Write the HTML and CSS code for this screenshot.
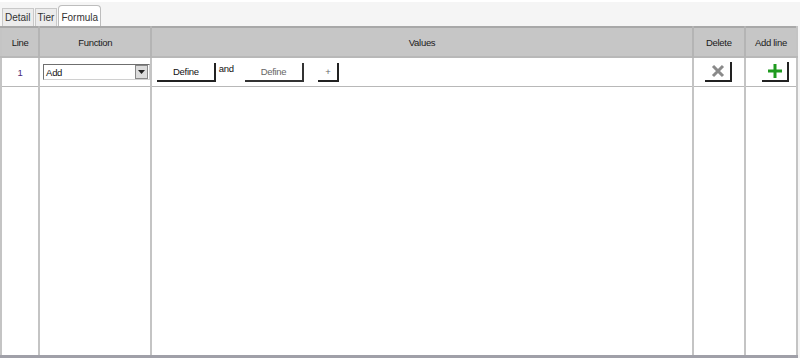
FILE: index.html
```html
<!DOCTYPE html>
<html lang="en">
<head>
  <meta charset="UTF-8" />
  <title>Formula</title>
  <link rel="stylesheet" href="styles.css">
</head>
<body>
  <div class="panel">
    <ul class="tabs">
      <li class="tab">Detail</li>
      <li class="tab">Tier</li>
      <li class="tab active">Formula</li>
    </ul>

    <table class="grid">
      <colgroup>
        <col class="c-line">
        <col class="c-func">
        <col class="c-values">
        <col class="c-del">
        <col class="c-add">
      </colgroup>
      <thead>
        <tr>
          <th>Line</th>
          <th>Function</th>
          <th>Values</th>
          <th>Delete</th>
          <th>Add line</th>
        </tr>
      </thead>
      <tbody>
        <tr class="row">
          <td class="num">1</td>
          <td>
            <div class="select">
              <span>Add</span>
              <span class="arrow"><svg width="7" height="4" viewBox="0 0 7 4"><path d="M0 0h7L3.5 4z" fill="#222"/></svg></span>
            </div>
          </td>
          <td class="values">
            <button class="btn define">Define</button>
            <span class="and">and</span>
            <button class="btn define faded">Define</button>
            <button class="btn plus">+</button>
          </td>
          <td class="center">
            <button class="btn icon">
              <svg width="14" height="14" viewBox="0 0 14 14"><path d="M2 2L12 12M12 2L2 12" stroke="#8a8a8a" stroke-width="3"/></svg>
            </button>
          </td>
          <td class="center">
            <button class="btn icon add">
              <svg width="16" height="16" viewBox="0 0 16 16"><path d="M8 1v14M1 8h14" stroke="#1f9a1f" stroke-width="3"/></svg>
            </button>
          </td>
        </tr>
        <tr class="filler">
          <td></td><td></td><td></td><td></td><td></td>
        </tr>
      </tbody>
    </table>
  </div>
</body>
</html>
```

FILE: styles.css
```css
body {
  margin: 0;
  background: #fff;
  font-family: Arial, "Liberation Sans", sans-serif;
  font-size: 9.5px;
  letter-spacing: -0.3px;
  color: #222;
}

.panel {
  margin-top: 2px;
  background: #f5f5f5;
  height: 356px;
  display: flex;
  flex-direction: column;
}

.tabs {
  list-style: none;
  margin: 0;
  padding: 2px 0 0 2px;
  display: flex;
  align-items: flex-end;
  height: 22px;
}

.tab {
  height: 17px;
  line-height: 18px;
  padding: 0 2px;
  margin-right: 1px;
  background: #ececec;
  border: 1px solid #c9c9c9;
  border-bottom: none;
  color: #333;
  font-size: 10px;
  letter-spacing: 0;
}

.tab.active {
  height: 20px;
  line-height: 23px;
  background: #fff;
  border-radius: 4px 4px 0 0;
  border-color: #bdbdbd;
}

.grid {
  flex: 1;
  width: 798px;
  border-collapse: collapse;
  table-layout: fixed;
  background: #fff;
  border-top: 2px solid #a8a8a8;
  border-left: 2px solid #c4c4c4;
  border-right: 2px solid #c4c4c4;
  border-bottom: 3px solid #a0a0a8;
}

.c-line { width: 38px; }
.c-func { width: 112px; }
.c-values { width: 540px; }
.c-del { width: 52px; }
.c-add { width: 52px; }

th {
  height: 28px;
  background: #c6c6c6;
  font-weight: normal;
  color: #1a1a1a;
  border-left: 2px solid #b4b4b4;
  padding: 0;
}

th:first-child, td:first-child {
  border-left: none;
}

td {
  border-left: 2px solid #c4c4c4;
  padding: 0;
}

.row td {
  height: 28px;
  border-top: 2px solid #b8b8b8;
  border-bottom: 1px solid #b8b8b8;
}

.num {
  text-align: center;
  color: #4a2a78;
}

.select {
  margin-left: 3px;
  width: 103px;
  height: 14px;
  border: 1px solid #6f6f6f;
  border-right-color: #d0d0d0;
  border-bottom-color: #d0d0d0;
  background: #fff;
  display: flex;
  align-items: center;
  justify-content: space-between;
  padding-left: 2px;
  box-sizing: content-box;
  color: #111;
}

.arrow {
  width: 11px;
  height: 12px;
  margin-right: 1px;
  background: #dcdcdc;
  border: 1px solid #888;
  display: flex;
  align-items: center;
  justify-content: center;
}

.values {
  padding-left: 5px;
}

.btn {
  background: #fff;
  border: none;
  border-bottom: 2px solid #222;
  border-right: 2px solid #222;
  font-family: Arial, "Liberation Sans", sans-serif;
  font-size: 9.5px;
  letter-spacing: -0.3px;
  color: #111;
  height: 19px;
  padding: 0;
  vertical-align: middle;
}

.define {
  width: 59px;
}

.faded {
  color: #666;
  border-color: #333;
}

.plus {
  width: 21px;
  margin-left: 12px;
  color: #666;
}

.and {
  display: inline-block;
  margin: 0 9px 0 0;
  vertical-align: 3px;
  color: #111;
}

.center {
  text-align: center;
}

.icon {
  width: 27px;
  height: 20px;
  display: inline-flex;
  align-items: center;
  justify-content: center;
}

.icon.add {
  margin-left: 10px;
}

.filler td {
  height: auto;
}
```
